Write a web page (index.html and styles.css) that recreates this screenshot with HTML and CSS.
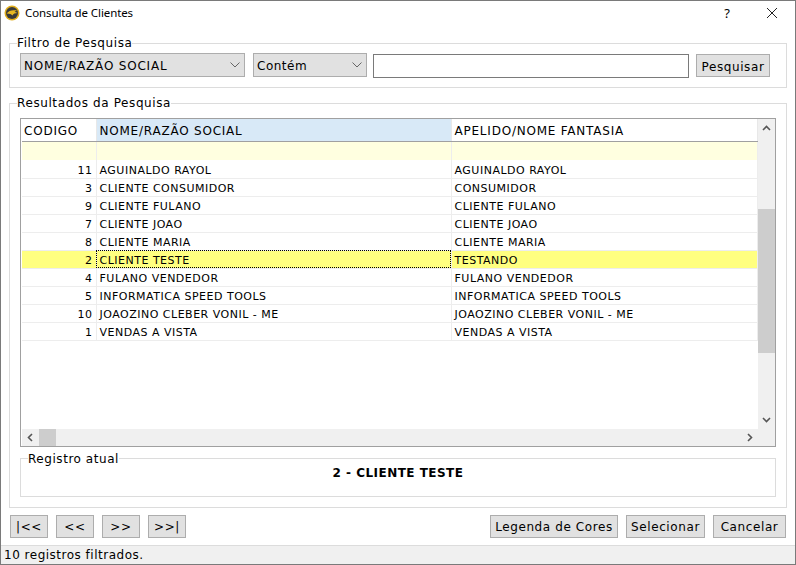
FILE: index.html
```html
<!DOCTYPE html>
<html lang="pt-BR">
<head>
    <meta charset="UTF-8">
    <title>Consulta de Clientes</title>
    <link rel="stylesheet" href="styles.css">
</head>
<body>
<div class="window">
    <div class="titlebar">
        <svg class="app-icon" width="16" height="16" viewBox="0 0 16 16">
            <circle cx="8" cy="8" r="7.5" fill="#e0ad1c"/>
            <circle cx="8" cy="8" r="6" fill="#3a3a38"/>
            <path d="M2.5 8.5 C5 5.5 8 4.5 13 5.5 L10.5 6.8 L13.5 8 C11 8.2 9.5 8.6 8.5 10.5 C7.5 9.2 5.5 8.4 2.5 8.5 Z" fill="#e8b820"/>
        </svg>
        <span class="title">Consulta de Clientes</span>
        <span class="help">?</span>
        <svg class="close" width="12" height="12" viewBox="0 0 12 12">
            <path d="M1 1 L11 11 M11 1 L1 11" stroke="#222" fill="none"/>
        </svg>
    </div>

    <div class="content">
        <fieldset class="group filter">
            <legend>Filtro de Pesquisa</legend>
            <div class="combo combo-field">
                <span>NOME/RAZÃO SOCIAL</span>
                <svg width="10" height="6" viewBox="0 0 10 6"><path d="M0.5 0.5 L5 5 L9.5 0.5" stroke="#666" fill="none"/></svg>
            </div>
            <div class="combo combo-mode">
                <span>Contém</span>
                <svg width="10" height="6" viewBox="0 0 10 6"><path d="M0.5 0.5 L5 5 L9.5 0.5" stroke="#666" fill="none"/></svg>
            </div>
            <input class="search" type="text">
            <button class="btn btn-search">Pesquisar</button>
        </fieldset>

        <fieldset class="group results">
            <legend>Resultados da Pesquisa</legend>
            <div class="grid">
                <div class="grid-main">
                    <div class="grid-view">
                        <table>
                            <colgroup>
                                <col class="col-code"><col class="col-name"><col class="col-alias">
                            </colgroup>
                            <thead>
                                <tr>
                                    <th>CODIGO</th>
                                    <th class="sorted">NOME/RAZÃO SOCIAL</th>
                                    <th>APELIDO/NOME FANTASIA</th>
                                </tr>
                            </thead>
                            <tbody>
                                <tr class="filter-row"><td></td><td></td><td></td></tr>
                                <tr><td class="num">11</td><td>AGUINALDO RAYOL</td><td>AGUINALDO RAYOL</td></tr>
                                <tr><td class="num">3</td><td>CLIENTE CONSUMIDOR</td><td>CONSUMIDOR</td></tr>
                                <tr><td class="num">9</td><td>CLIENTE FULANO</td><td>CLIENTE FULANO</td></tr>
                                <tr><td class="num">7</td><td>CLIENTE JOAO</td><td>CLIENTE JOAO</td></tr>
                                <tr><td class="num">8</td><td>CLIENTE MARIA</td><td>CLIENTE MARIA</td></tr>
                                <tr class="selected"><td class="num">2</td><td class="current">CLIENTE TESTE</td><td>TESTANDO</td></tr>
                                <tr><td class="num">4</td><td>FULANO VENDEDOR</td><td>FULANO VENDEDOR</td></tr>
                                <tr><td class="num">5</td><td>INFORMATICA SPEED TOOLS</td><td>INFORMATICA SPEED TOOLS</td></tr>
                                <tr><td class="num">10</td><td>JOAOZINO CLEBER VONIL - ME</td><td>JOAOZINO CLEBER VONIL - ME</td></tr>
                                <tr><td class="num">1</td><td>VENDAS A VISTA</td><td>VENDAS A VISTA</td></tr>
                            </tbody>
                        </table>
                    </div>
                    <div class="hscroll">
                        <svg width="9" height="9" viewBox="0 0 9 9"><path d="M6 1 L2.5 4.5 L6 8" stroke="#555" stroke-width="1.6" fill="none"/></svg>
                        <div class="hthumb"></div>
                        <svg class="hright" width="9" height="9" viewBox="0 0 9 9"><path d="M3 1 L6.5 4.5 L3 8" stroke="#555" stroke-width="1.6" fill="none"/></svg>
                    </div>
                </div>
                <div class="vscroll">
                    <svg width="9" height="9" viewBox="0 0 9 9"><path d="M1 6 L4.5 2.5 L8 6" stroke="#555" stroke-width="1.6" fill="none"/></svg>
                    <div class="vthumb"></div>
                    <svg class="vdown" width="9" height="9" viewBox="0 0 9 9"><path d="M1 3 L4.5 6.5 L8 3" stroke="#555" stroke-width="1.6" fill="none"/></svg>
                </div>
            </div>

            <fieldset class="group current-record">
                <legend>Registro atual</legend>
                <div class="record-text">2 - CLIENTE TESTE</div>
            </fieldset>
        </fieldset>

        <div class="actions">
            <button class="btn btn-nav">|&lt;&lt;</button>
            <button class="btn btn-nav">&lt;&lt;</button>
            <button class="btn btn-nav">&gt;&gt;</button>
            <button class="btn btn-nav">&gt;&gt;|</button>
            <button class="btn btn-legend">Legenda de Cores</button>
            <button class="btn btn-select">Selecionar</button>
            <button class="btn btn-cancel">Cancelar</button>
        </div>
    </div>

    <div class="statusbar">10 registros filtrados.</div>
</div>
</body>
</html>
```

FILE: styles.css
```css
* {
    box-sizing: border-box;
}

body {
    margin: 0;
    background-color: #ffffff;
    font-family: "DejaVu Sans", Verdana, sans-serif;
    font-size: 11px;
    color: #000000;
}

.window {
    width: 796px;
    height: 565px;
    border: 1px solid #7a7a7a;
    display: flex;
    flex-direction: column;
    background-color: #ffffff;
}

.titlebar {
    height: 28px;
    flex: none;
    display: flex;
    align-items: center;
    padding: 0 17px 4px 3px;
}

.app-icon {
    flex: none;
}

.title {
    margin-left: 5px;
    margin-bottom: 1px;
    font-family: "Noto Sans", sans-serif;
    font-size: 11.5px;
    letter-spacing: -0.1px;
    flex: 1;
}

.help {
    font-family: "Noto Sans", sans-serif;
    font-size: 13px;
    margin-right: 36px;
}

.content {
    flex: 1;
    padding: 7px 8px 0 8px;
    display: flex;
    flex-direction: column;
}

.group {
    margin: 0;
    border: 1px solid #dcdcdc;
    padding: 0;
    min-width: 0;
}

.group legend {
    padding: 0;
    margin-left: -3px;
    font-size: 12px;
    line-height: 14px;
    letter-spacing: 0.6px;
}

.filter {
    height: 52px;
    padding: 3px 10px 0 10px;
    display: flex;
    align-items: flex-start;
}

.combo {
    height: 24px;
    display: flex;
    align-items: center;
    justify-content: space-between;
    background-color: #e1e1e1;
    border: 1px solid #adadad;
    padding: 2px 4px 0 3px;
    font-size: 12px;
}

.combo svg {
    margin-top: -2px;
}

.combo-field {
    width: 225px;
    margin-right: 8px;
    letter-spacing: 0.8px;
}

.combo-mode {
    width: 114px;
    margin-right: 6px;
    letter-spacing: 0.5px;
}

.search {
    width: 316px;
    height: 24px;
    margin: 1px 7px 0 0;
    border: 1px solid #7a7a7a;
    background-color: #ffffff;
}

.btn {
    height: 23px;
    padding: 0;
    background-color: #e1e1e1;
    border: 1px solid #adadad;
    font-family: "DejaVu Sans", Verdana, sans-serif;
    font-size: 12px;
    letter-spacing: 0.6px;
    color: #000000;
}

.btn-search {
    width: 74px;
    margin-top: 1px;
    padding-top: 2px;
}

.results {
    margin-top: 8px;
    height: 412px;
    padding: 8px 10px 0 10px;
}

.grid {
    width: 756px;
    height: 329px;
    display: flex;
    border: 1px solid #a0a0a0;
    padding-left: 1px;
}

.grid-main {
    width: 736px;
    display: flex;
    flex-direction: column;
}

.grid-view {
    flex: 1;
    overflow: hidden;
}

table {
    width: 736px;
    table-layout: fixed;
    border-collapse: collapse;
    font-size: 11px;
    letter-spacing: 0.5px;
}

.col-code {
    width: 74px;
}

.col-name {
    width: 355px;
}

th {
    height: 22px;
    padding: 3px 3px 0 3px;
    font-weight: normal;
    font-size: 12px;
    letter-spacing: 0.78px;
    text-align: left;
    background-color: #ffffff;
    border-bottom: 1px solid #a0a0a0;
    border-right: 1px solid #e8e8e8;
    white-space: nowrap;
}

th:first-child {
    padding-left: 2px;
}

th.sorted {
    background-color: #d8e9f7;
}

td {
    height: 18px;
    padding: 2px 3px 0 3px;
    border-bottom: 1px solid #ededed;
    border-right: 1px solid #ededed;
    white-space: nowrap;
}

td.num {
    text-align: right;
}

.filter-row td {
    height: 19px;
    background-color: #ffffe0;
    border-bottom: none;
}

.filter-row + tr td {
    padding-top: 4px;
}

.selected td {
    background-color: #ffff80;
}

.selected td.current {
    outline: 1px dotted #000000;
    outline-offset: -1px;
}

.hscroll {
    height: 17px;
    flex: none;
    display: flex;
    align-items: center;
    background-color: #f0f0f0;
    padding-left: 4px;
}

.hthumb {
    width: 17px;
    height: 17px;
    margin-left: 4px;
    background-color: #cdcdcd;
}

.hright {
    margin-left: auto;
    margin-right: 4px;
}

.vscroll {
    width: 18px;
    display: flex;
    flex-direction: column;
    align-items: center;
    background-color: #f0f0f0;
    padding-top: 5px;
    padding-bottom: 22px;
}

.vthumb {
    width: 17px;
    height: 144px;
    margin-top: 76px;
    background-color: #cdcdcd;
}

.vdown {
    margin-top: auto;
}

.current-record {
    margin-top: 3px;
    width: 756px;
    height: 47px;
}

.current-record legend {
    margin-left: 7px;
    padding-top: 2px;
    letter-spacing: 0.55px;
}

.record-text {
    text-align: center;
    font-weight: bold;
    font-size: 12px;
    line-height: 14px;
    letter-spacing: 0.47px;
}

.actions {
    margin-top: 7px;
    height: 23px;
    display: flex;
    gap: 8px;
    margin-right: 1px;
    margin-left: 1px;
}

.btn-nav {
    width: 38px;
}

.btn-legend {
    width: 128px;
    margin-left: auto;
}

.btn-select {
    width: 79px;
}

.btn-cancel {
    width: 73px;
}

.statusbar {
    height: 19px;
    flex: none;
    margin-top: 7px;
    padding-left: 3px;
    background-color: #f0f0f0;
    border-top: 1px solid #dcdcdc;
    font-size: 12px;
    letter-spacing: 0.5px;
    line-height: 18px;
}
```
